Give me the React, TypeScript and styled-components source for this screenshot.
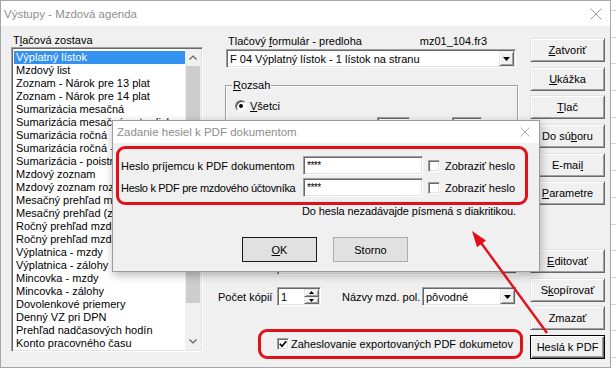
import React from 'react';
import styled, { createGlobalStyle, css } from 'styled-components';

const GlobalStyle = createGlobalStyle`
  html, body {
    margin: 0;
    padding: 0;
  }
  body {
    width: 616px;
    height: 371px;
    overflow: hidden;
    background-color: #fff;
    background-image: repeating-linear-gradient(to bottom, #d6d6d6 0 1px, #fff 1px 26.7px);
    background-position: 0 10px;
    font-family: "Liberation Sans", Arial, sans-serif;
    font-size: 11px;
    color: #000;
  }
`;

const RED = '#e2101b';

const sunken = css`
  border: 1px solid;
  border-color: #a0a0a0 #fff #fff #a0a0a0;
  box-shadow: inset 1px 1px 0 #696969, inset -1px -1px 0 #e3e3e3;
  background: #fff;
`;

const raised = css`
  border: 1px solid;
  border-color: #e3e3e3 #696969 #696969 #e3e3e3;
  box-shadow: inset 1px 1px 0 #fff, inset -1px -1px 0 #a0a0a0;
  background: #f0f0f0;
`;

const Screen = styled.div`
  position: relative;
  width: 616px;
  height: 371px;
`;

const Window = styled.div`
  width: 611px;
  height: 368px;
  box-sizing: border-box;
  border: 1px solid #a6a6a6;
  background: #f0f0f0;
  display: flex;
  flex-direction: column;
`;

const TitleBar = styled.div<{ $height: number; $padLeft: number; $padRight: number }>`
  height: ${p => p.$height}px;
  flex: none;
  background: #fff;
  display: flex;
  align-items: center;
  justify-content: space-between;
  padding: 0 ${p => p.$padRight}px 0 ${p => p.$padLeft}px;
`;

const TitleText = styled.span`
  font-size: 11.5px;
  color: #8e8e8e;
`;

const Client = styled.div`
  flex: 1;
  display: flex;
  gap: 12px;
  padding: 8px 5px 11px 10px;
`;

const Column = styled.div<{ $width: number }>`
  width: ${p => p.$width}px;
  flex: none;
  display: flex;
  flex-direction: column;
`;

const Key = styled.span`
  text-decoration: underline;
  text-underline-offset: 1px;
`;

const SectionLabel = styled.div`
  height: 13px;
  line-height: 13px;
  padding-left: 2px;
  white-space: nowrap;
`;

const ListBox = styled.div`
  ${sunken};
  height: 305px;
  box-sizing: border-box;
  display: flex;
  padding: 1px;
`;

const ListItems = styled.div`
  flex: 1;
  min-width: 0;
  padding-top: 2px;
  padding-left: 1px;
  overflow: hidden;
`;

const ListItem = styled.div<{ $selected?: boolean }>`
  height: 13px;
  line-height: 13px;
  padding-left: 2px;
  white-space: nowrap;
  overflow: hidden;
  background: ${p => (p.$selected ? '#3391f0' : 'transparent')};
  color: ${p => (p.$selected ? '#fff' : '#000')};
`;

const ScrollBar = styled.div`
  width: 16px;
  flex: none;
  display: flex;
  flex-direction: column;
  background: #f0f0f0;
`;

const ScrollArrow = styled.div`
  height: 17px;
  flex: none;
  display: flex;
  align-items: center;
  justify-content: center;
`;

const ScrollThumb = styled.div`
  height: 237px;
  flex: none;
  margin: 0 1px;
  background: #cdcdcd;
`;

const ScrollTrack = styled.div`
  flex: 1;
`;

const HeaderRow = styled.div`
  height: 13px;
  line-height: 13px;
  margin-top: 1px;
  display: flex;
  padding-left: 13px;
  padding-right: 31px;
  white-space: nowrap;
`;

const FileName = styled.span`
  margin-left: auto;
`;

const Combo = styled.div<{ $width?: number }>`
  ${sunken};
  box-sizing: border-box;
  height: 19px;
  ${p => (p.$width ? `width: ${p.$width}px;` : 'flex: 1;')}
  flex-shrink: 0;
  display: flex;
  align-items: center;
  padding-left: 3px;
`;

const FieldText = styled.span`
  flex: 1;
  white-space: nowrap;
  overflow: hidden;
`;

const DropButton = styled.div`
  ${raised};
  box-sizing: border-box;
  width: 15px;
  align-self: stretch;
  margin: 1px;
  display: flex;
  align-items: center;
  justify-content: center;
`;

const SpinButtons = styled.div`
  width: 15px;
  align-self: stretch;
  margin: 1px;
  display: flex;
  flex-direction: column;
`;

const SpinHalf = styled.div`
  ${raised};
  box-sizing: border-box;
  flex: 1;
  display: flex;
  align-items: center;
  justify-content: center;
`;

const Group = styled.div`
  position: relative;
  margin: 17px 0 0 10px;
  height: 160px;
  box-sizing: border-box;
  border: 1px solid #a0a0a0;
  box-shadow: inset 1px 1px 0 #fff, 1px 1px 0 #fff;
  padding: 13px 0 0 9px;
  display: flex;
  flex-direction: column;
  gap: 5px;
`;

const GroupCaption = styled.span`
  position: absolute;
  top: -7px;
  left: 6px;
  padding: 0 1px;
  line-height: 13px;
  background: #f0f0f0;
`;

const RadioRow = styled.div`
  height: 13px;
  display: flex;
  align-items: center;
  gap: 3px;
`;

const Radio = styled.span<{ $checked?: boolean }>`
  width: 12px;
  height: 12px;
  box-sizing: border-box;
  border-radius: 50%;
  border: 1px solid;
  border-color: #808080 #fff #fff #808080;
  background: #fff;
  box-shadow: inset 1px 1px 0 #404040;
  display: flex;
  align-items: center;
  justify-content: center;
  &::after {
    content: '';
    width: 4px;
    height: 4px;
    border-radius: 50%;
    background: ${p => (p.$checked ? '#000' : 'transparent')};
  }
`;

const FieldsRow = styled.div`
  display: flex;
  gap: 42px;
  padding-left: 142px;
`;

const SmallField = styled.div<{ $width: number }>`
  ${sunken};
  box-sizing: border-box;
  width: ${p => p.$width}px;
  height: 19px;
`;

const FormRow = styled.div<{ $top: number; $padLeft: number }>`
  height: 19px;
  margin-top: ${p => p.$top}px;
  padding-left: ${p => p.$padLeft}px;
  display: flex;
  align-items: center;
  white-space: nowrap;
`;

const FormLabel = styled.span<{ $width?: number; $tight?: boolean }>`
  ${p => (p.$width ? `width: ${p.$width}px;` : '')}
  ${p => (p.$tight ? 'letter-spacing: -0.3px;' : '')}
  flex: none;
  white-space: nowrap;
`;

const Spin = styled.div`
  ${sunken};
  box-sizing: border-box;
  width: 44px;
  height: 19px;
  margin-left: 5px;
  display: flex;
  padding-left: 3px;
  align-items: center;
`;

const Marked = styled.div`
  margin: 23px -5px 0 43px;
  height: 30px;
  box-sizing: border-box;
  border: 3px solid ${RED};
  border-radius: 9px;
  display: flex;
  align-items: center;
  padding-left: 16px;
  gap: 2px;
  white-space: nowrap;
`;

const Check = styled.span`
  ${sunken};
  box-sizing: border-box;
  width: 12px;
  height: 12px;
  flex: none;
  display: flex;
  align-items: center;
  justify-content: center;
`;

const ButtonStack = styled.div<{ $push?: boolean }>`
  display: flex;
  flex-direction: column;
  gap: 4.7px;
  margin-top: ${p => (p.$push ? 'auto' : '4px')};
`;

const Button = styled.div<{ $isDefault?: boolean }>`
  ${raised};
  box-sizing: border-box;
  width: 75px;
  height: 24px;
  display: flex;
  align-items: center;
  justify-content: center;
  white-space: nowrap;
  ${p =>
    p.$isDefault &&
    css`
      border: 1px solid #000;
      box-shadow: inset 1px 1px 0 #fff, inset -1px -1px 0 #696969, inset -2px -2px 0 #a0a0a0;
    `}
`;

const Dialog = styled.div`
  position: absolute;
  left: 112px;
  top: 120px;
  width: 428px;
  height: 152px;
  box-sizing: border-box;
  border: 1px solid #9c9c9c;
  background: #f0f0f0;
  box-shadow: 1px 3px 9px rgba(0, 0, 0, 0.28);
  display: flex;
  flex-direction: column;
`;

const DialogBody = styled.div`
  padding: 3px 11px 0 3px;
  display: flex;
  flex-direction: column;
`;

const PasswordFrame = styled.div`
  border: 3px solid ${RED};
  border-radius: 9px;
  padding: 7px 0 5px 2px;
  display: flex;
  flex-direction: column;
  gap: 3px;
`;

const PasswordRow = styled.div`
  height: 19px;
  display: flex;
  align-items: center;
  white-space: nowrap;
`;

const PasswordInput = styled.div`
  ${sunken};
  box-sizing: border-box;
  width: 120px;
  height: 19px;
  margin-right: 5px;
  padding: 3px 0 0 3px;
  font-size: 10px;
  line-height: 12px;
  letter-spacing: -0.5px;
`;

const ShowLabel = styled.span`
  margin-left: 5px;
`;

const Hint = styled.div`
  height: 13px;
  line-height: 13px;
  padding-left: 186px;
  white-space: nowrap;
  letter-spacing: -0.1px;
`;

const DialogButtons = styled.div`
  margin-top: 19px;
  padding-left: 126px;
  display: flex;
  gap: 16px;
`;

const DialogButton = styled.div<{ $isDefault?: boolean }>`
  width: 75px;
  height: 25px;
  box-sizing: border-box;
  border: 1px solid ${p => (p.$isDefault ? '#1a1a1a' : '#adadad')};
  background: #e1e1e1;
  display: flex;
  align-items: center;
  justify-content: center;
`;

const Overlay = styled.svg`
  position: absolute;
  left: 0;
  top: 0;
  pointer-events: none;
`;

const CloseX = ({ size }: { size: number }) => (
  <svg width={size} height={size} viewBox="0 0 10 10">
    <path d="M0.5 0.5 L9.5 9.5 M9.5 0.5 L0.5 9.5" stroke="#9a9a9a" strokeWidth="0.8" fill="none" />
  </svg>
);

const Chevron = ({ down }: { down?: boolean }) => (
  <svg width="8" height="5" viewBox="0 0 8 5">
    <polyline
      points={down ? '0.5,0.5 4,4 7.5,0.5' : '0.5,4.5 4,1 7.5,4.5'}
      stroke="#606060"
      strokeWidth="1.2"
      fill="none"
    />
  </svg>
);

const Tri = ({ up, w = 7 }: { up?: boolean; w?: number }) => {
  const h = Math.ceil(w / 2);
  return (
    <svg width={w} height={h} viewBox={`0 0 ${w} ${h}`}>
      <polygon points={up ? `0,${h} ${w},${h} ${w / 2},0` : `0,0 ${w},0 ${w / 2},${h}`} fill="#000" />
    </svg>
  );
};

const Tick = () => (
  <svg width="8" height="8" viewBox="0 0 8 8">
    <path d="M0.8 3.8 L3 6.2 L7.2 1.2" stroke="#000" strokeWidth="1.7" fill="none" />
  </svg>
);

const reports = [
  'Výplatný lístok',
  'Mzdový list',
  'Zoznam - Nárok pre 13 plat',
  'Zoznam - Nárok pre 14 plat',
  'Sumarizácia mesačná',
  'Sumarizácia mesačná - stredisko',
  'Sumarizácia ročná',
  'Sumarizácia ročná - stredisko',
  'Sumarizácia - poistné',
  'Mzdový zoznam',
  'Mzdový zoznam rozšírený',
  'Mesačný prehľad mzdy',
  'Mesačný prehľad (zálohy)',
  'Ročný prehľad mzd. položiek',
  'Ročný prehľad mzd. nákladov',
  'Výplatnica - mzdy',
  'Výplatnica - zálohy',
  'Mincovka - mzdy',
  'Mincovka - zálohy',
  'Dovolenkové priemery',
  'Denný VZ pri DPN',
  'Prehľad nadčasových hodín',
  'Konto pracovného času',
];

export default function App() {
  return (
    <>
      <GlobalStyle />
      <Screen>
        <Window>
          <TitleBar $height={25} $padLeft={3} $padRight={8}>
            <TitleText>Výstupy - Mzdová agenda</TitleText>
            <CloseX size={12} />
          </TitleBar>
          <Client>
            <Column $width={192}>
              <SectionLabel>
                T<Key>l</Key>ačová zostava
              </SectionLabel>
              <ListBox>
                <ListItems>
                  {reports.map((r, i) => (
                    <ListItem key={r} $selected={i === 0}>
                      {r}
                    </ListItem>
                  ))}
                </ListItems>
                <ScrollBar>
                  <ScrollArrow>
                    <Chevron />
                  </ScrollArrow>
                  <ScrollThumb />
                  <ScrollTrack />
                  <ScrollArrow>
                    <Chevron down />
                  </ScrollArrow>
                </ScrollBar>
              </ListBox>
            </Column>

            <Column $width={303}>
              <HeaderRow>
                <span>
                  Tlačový <Key>f</Key>ormulár - predloha
                </span>
                <FileName>mz01_104.fr3</FileName>
              </HeaderRow>
              <FormRow $top={1} $padLeft={11}>
                <Combo $width={290}>
                  <FieldText>F 04 Výplatný lístok - 1 lístok na stranu</FieldText>
                  <DropButton>
                    <Tri />
                  </DropButton>
                </Combo>
              </FormRow>

              <Group>
                <GroupCaption>
                  <Key>R</Key>ozsah
                </GroupCaption>
                <RadioRow>
                  <Radio $checked />
                  <span>
                    <Key>V</Key>šetci
                  </span>
                </RadioRow>
                <FieldsRow>
                  <SmallField $width={33} />
                  <SmallField $width={30} />
                </FieldsRow>
              </Group>

              <FormRow $top={11} $padLeft={8}>
                <FormLabel $width={54}>
                  <Key>Z</Key>oradenie
                </FormLabel>
                <Combo>
                  <FieldText>Poradie</FieldText>
                  <DropButton>
                    <Tri />
                  </DropButton>
                </Combo>
              </FormRow>

              <FormRow $top={12} $padLeft={3}>
                <FormLabel $width={54}>Počet kópií</FormLabel>
                <Spin>
                  <FieldText>1</FieldText>
                  <SpinButtons>
                    <SpinHalf>
                      <Tri up w={5} />
                    </SpinHalf>
                    <SpinHalf>
                      <Tri w={5} />
                    </SpinHalf>
                  </SpinButtons>
                </Spin>
                <FormLabel style={{ marginLeft: 21 }}>Názvy mzd. pol.</FormLabel>
                <Combo $width={95} style={{ marginLeft: 'auto', marginRight: 1 }}>
                  <FieldText>pôvodné</FieldText>
                  <DropButton>
                    <Tri />
                  </DropButton>
                </Combo>
              </FormRow>

              <Marked>
                <Check>
                  <Tick />
                </Check>
                <span>Zaheslovanie exportovaných PDF dokumetov</span>
              </Marked>
            </Column>

            <Column $width={75}>
              <ButtonStack>
                <Button>
                  <span>
                    <Key>Z</Key>atvoriť
                  </span>
                </Button>
                <Button>
                  <span>
                    <Key>U</Key>kážka
                  </span>
                </Button>
                <Button>
                  <span>
                    <Key>T</Key>lač
                  </span>
                </Button>
                <Button>
                  <span>
                    Do sú<Key>b</Key>oru
                  </span>
                </Button>
                <Button>
                  <span>
                    E-mai<Key>l</Key>
                  </span>
                </Button>
                <Button>
                  <span>
                    <Key>P</Key>arametre
                  </span>
                </Button>
              </ButtonStack>
              <ButtonStack $push>
                <Button>
                  <span>
                    <Key>E</Key>ditovať
                  </span>
                </Button>
                <Button>
                  <span>
                    S<Key>k</Key>opírovať
                  </span>
                </Button>
                <Button>Zmazať</Button>
                <Button $isDefault>Heslá k PDF</Button>
              </ButtonStack>
            </Column>
          </Client>
        </Window>

        <Dialog>
          <TitleBar $height={22} $padLeft={4} $padRight={9}>
            <TitleText>Zadanie hesiel k PDF dokumentom</TitleText>
            <CloseX size={10} />
          </TitleBar>
          <DialogBody>
            <PasswordFrame>
              <PasswordRow>
                <FormLabel $width={182}>Heslo príjemcu k PDF dokumentom</FormLabel>
                <PasswordInput>****</PasswordInput>
                <Check />
                <ShowLabel>Zobraziť heslo</ShowLabel>
              </PasswordRow>
              <PasswordRow>
                <FormLabel $width={182} $tight>
                  Heslo k PDF pre mzdového účtovníka
                </FormLabel>
                <PasswordInput>****</PasswordInput>
                <Check />
                <ShowLabel>Zobraziť heslo</ShowLabel>
              </PasswordRow>
            </PasswordFrame>
            <Hint>Do hesla nezadávajde písmená s diakritikou.</Hint>
            <DialogButtons>
              <DialogButton $isDefault>
                <span>
                  <Key>O</Key>K
                </span>
              </DialogButton>
              <DialogButton>Storno</DialogButton>
            </DialogButtons>
          </DialogBody>
        </Dialog>

        <Overlay width="616" height="371" viewBox="0 0 616 371">
          <line x1="547" y1="333" x2="479" y2="240" stroke={RED} strokeWidth="2.4" />
          <polygon points="472,231 486,240.6 477,247.2" fill={RED} />
        </Overlay>
      </Screen>
    </>
  );
}
